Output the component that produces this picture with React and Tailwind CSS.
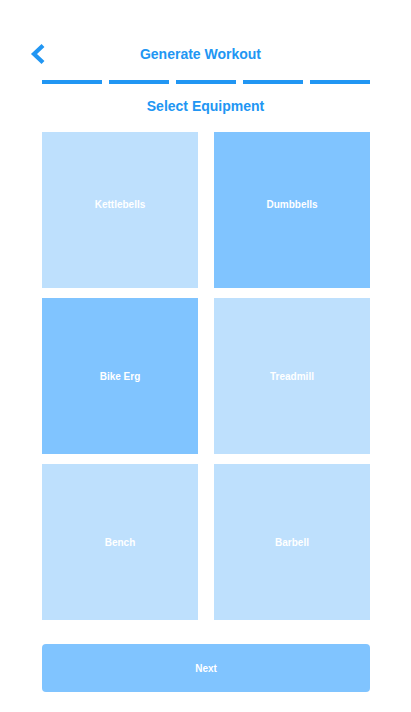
import React, { useState } from 'react'

const equipment = [
  { name: 'Kettlebells', selected: false },
  { name: 'Dumbbells', selected: true },
  { name: 'Bike Erg', selected: true },
  { name: 'Treadmill', selected: false },
  { name: 'Bench', selected: false },
  { name: 'Barbell', selected: false },
]

function App() {
  const [items, setItems] = useState(equipment)

  // Toggle selection on a card
  const toggle = (name) => {
    setItems(items.map(i => (i.name === name ? { ...i, selected: !i.selected } : i)))
  }

  return (
    <div className="min-h-screen bg-white font-['Liberation_Sans',Arial,sans-serif] pt-[42px]">
      {/* Header */}
      <div className="flex items-center h-[24px] pl-[28px] pr-[38px]">
        <div className="w-5 flex items-center">
          <svg width="16" height="22" viewBox="0 0 16 22" className="ml-[2px]">
            <polyline points="13,2.5 4,11 13,19.5" fill="none" stroke="#2196F3" strokeWidth="4.2" strokeLinejoin="miter" strokeLinecap="butt" />
          </svg>
        </div>
        <h1 className="flex-1 text-center text-[14px] font-bold text-[#2196F3]">Generate Workout</h1>
        <div className="w-5" />
      </div>

      {/* Progress */}
      <div className="ml-[42px] mr-[41px] mt-[14px] flex gap-[7px]">
        {[0, 1, 2, 3, 4].map(i => (
          <div key={i} className="flex-1 h-[4px] bg-[#2196F3]" />
        ))}
      </div>

      <h2 className="mt-[14px] text-center text-[14px] leading-[16px] font-bold text-[#2196F3]">Select Equipment</h2>

      {/* Equipment grid */}
      <div className="ml-[42px] mr-[41px] mt-[18px] grid grid-cols-2 gap-x-[16px] gap-y-[10px]">
        {items.map((item, idx) => (
          <button
            key={item.name}
            onClick={() => toggle(item.name)}
            className={`h-[156px] flex items-center justify-center text-[10px] font-bold text-white ${idx < 2 ? 'pb-[12px]' : 'pt-[1px]'} ${item.selected ? 'bg-[#80C4FF]' : 'bg-[#BEE0FD]'}`}
          >
            {item.name}
          </button>
        ))}
      </div>

      <div className="ml-[42px] mr-[41px] mt-[24px]">
        <button className="w-full h-[48px] pt-[1px] rounded-[4px] bg-[#80C4FF] text-white text-[10px] font-bold">
          Next
        </button>
      </div>
    </div>
  )
}

export default App
